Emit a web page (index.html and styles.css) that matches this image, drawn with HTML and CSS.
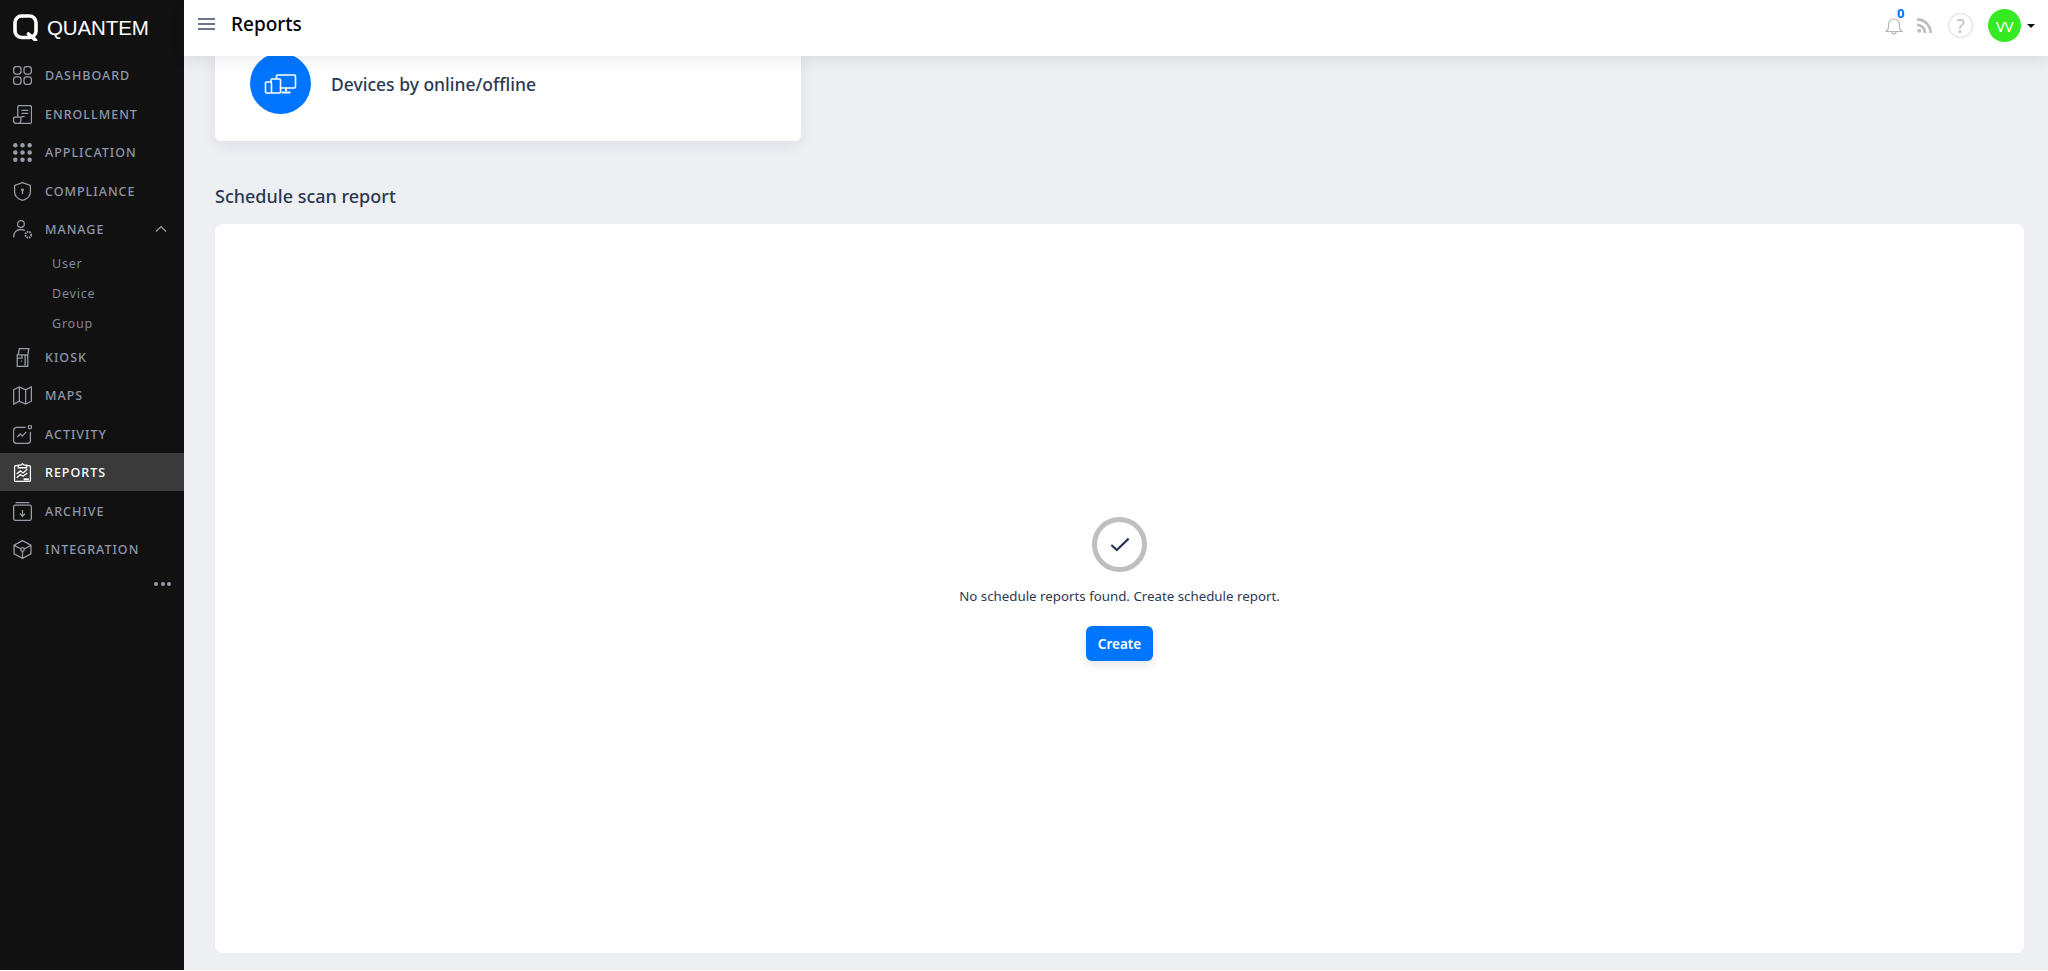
FILE: index.html
```html
<!DOCTYPE html>
<html lang="en">
<head>
<meta charset="utf-8">
<title>Reports</title>
<link rel="stylesheet" href="styles.css">
</head>
<body>
<div class="app">
  <aside class="sidebar">
    <div class="brand">
      <svg class="brand-mark" viewBox="0 0 27 27" fill="none" stroke="#fff"><rect x="2" y="2" width="21" height="21.5" rx="6.5" stroke-width="3.6"/><path d="M15.5 20l7 6" stroke-width="3.6" stroke-linecap="round"/></svg>
      <span class="brand-name">QUANTEM</span>
    </div>
    <nav class="nav">
      <a class="nav-item"><svg class="ico" viewBox="0 0 18 18"><rect x=".6" y=".6" width="7" height="7" rx="2.400"/><rect x="10.400" y=".6" width="7" height="7" rx="2.400"/><rect x=".6" y="10.400" width="7" height="7" rx="2.400"/><rect x="10.400" y="10.400" width="7" height="7" rx="2.400"/></svg><span>DASHBOARD</span></a>
      <a class="nav-item"><svg class="ico" viewBox="0 0 18 18"><path d="M4.500 11.500V2a1.500 1.500 0 0 1 1.500-1.500h10A1.500 1.500 0 0 1 17.500 2v14a1.500 1.500 0 0 1-1.500 1.500H3a2.500 2.500 0 0 1-2.500-2.500v-2.500a1 1 0 0 1 1-1H7.500V15a2.500 2.500 0 0 1-2.500 2.500M8 5h6.500M8 8h6.500M8 11h3"/></svg><span>ENROLLMENT</span></a>
      <a class="nav-item"><svg class="ico ico-solid" viewBox="0 0 18 18"><circle cx="2.200" cy="2.200" r="2.100"/><circle cx="9" cy="2.200" r="2.100"/><circle cx="15.800" cy="2.200" r="2.100"/><circle cx="2.200" cy="9" r="2.100"/><circle cx="9" cy="9" r="2.100"/><circle cx="15.800" cy="9" r="2.100"/><circle cx="2.200" cy="15.800" r="2.100"/><circle cx="9" cy="15.800" r="2.100"/><circle cx="15.800" cy="15.800" r="2.100"/></svg><span>APPLICATION</span></a>
      <a class="nav-item"><svg class="ico" viewBox="0 0 18 18"><path d="M9 .6l7.500 2.700v6c0 4.200-3.400 7-7.500 8.100-4.100-1.100-7.500-3.900-7.500-8.100v-6z"/><path d="M9 8v3.500"/><circle cx="9" cy="7.500" r=".8"/></svg><span>COMPLIANCE</span></a>
      <a class="nav-item"><svg class="ico" viewBox="0 0 18 18"><circle cx="7.500" cy="3.800" r="3.200"/><path d="M.6 16.500c0-5 2.800-7.500 6.900-7.500 1.500 0 2.700.3 3.700 1"/><circle cx="14.500" cy="14" r="2.800" stroke-dasharray="1.500 .8" stroke-width="1.800"/></svg><span>MANAGE</span><svg class="chev" viewBox="0 0 12 8"><path d="M1 6.500l5-5 5 5"/></svg></a>
      <div class="subnav">
        <a class="sub-item">User</a>
        <a class="sub-item">Device</a>
        <a class="sub-item">Group</a>
      </div>
      <a class="nav-item"><svg class="ico" viewBox="0 0 18 18"><path d="M4 17.500V6.500h7.500v11zM4 17.500h7.500M5 6.500L6 .6h9l-1 5.900-2.500.6M14 6.500v11h-2.500M4 9.500h4.500V6.500M7.500 12.500h1"/></svg><span>KIOSK</span></a>
      <a class="nav-item"><svg class="ico" viewBox="0 0 18 18"><path d="M.6 3.600L6 .8l6 2.800 5.400-2.800v13.600L12 17.200l-6-2.800-5.400 2.800zM6 .8v13.600M12 3.600v13.600"/></svg><span>MAPS</span></a>
      <a class="nav-item"><svg class="ico" viewBox="0 0 18 18"><path d="M12 2.200H3.500a3 3 0 0 0-3 3v9.300a3 3 0 0 0 3 3h10a3 3 0 0 0 3-3V6.500"/><circle cx="16" cy="2" r="1.600"/><path d="M4 11.500L6.800 8.500l2 2L12.500 6.500"/></svg><span>ACTIVITY</span></a>
      <a class="nav-item is-active"><svg class="ico" viewBox="0 0 18 18"><path d="M5 2.500H2.500a1 1 0 0 0-1 1v13a1 1 0 0 0 1 1h13a1 1 0 0 0 1-1v-13a1 1 0 0 0-1-1H13"/><path d="M5 2H7.500L9 .6 10.500 2H13v2.500H5z"/><path d="M3.500 10.500l3.500-3 2.500 2 4-3.500M3.500 14l3.500-3 2.500 1.500 4-3"/><path d="M10 15.500h5" stroke-width="2"/></svg><span>REPORTS</span></a>
      <a class="nav-item"><svg class="ico" viewBox="0 0 18 18"><path d="M2.500.6h13M.6 4.500A1.500 1.500 0 0 1 2.100 3h13.800a1.500 1.500 0 0 1 1.500 1.500v11.400a1.500 1.500 0 0 1-1.500 1.500H2.100a1.500 1.500 0 0 1-1.500-1.500zM9 7.500v6M6.500 11L9 13.500 11.500 11"/></svg><span>ARCHIVE</span></a>
      <a class="nav-item"><svg class="ico" viewBox="0 0 18 18"><path d="M9 .6l8 4.200v8.400l-8 4.200-8-4.200V4.800zM1.500 5.300L7.500 8.500M10.500 8.500l6-3.200M9 10.500v6"/><circle cx="9" cy="9" r="1.700"/></svg><span>INTEGRATION</span></a>
    </nav>
    <div class="more"><i></i><i></i><i></i></div>
  </aside>

  <div class="content">
    <header class="topbar">
      <svg class="burger" viewBox="0 0 17 12"><path d="M0 1h17M0 6h17M0 11h17"/></svg>
      <h1 class="page-title">Reports</h1>
      <div class="top-actions">
        <span class="bell">
          <svg class="bell-ico" viewBox="0 0 18 18"><path d="M1 14.500c1.500-1 2.500-2 2.500-4.500V7.500a5.500 5.500 0 0 1 11 0V10c0 2.500 1 3.500 2.500 4.500zM7 15c0 2.500 4 2.500 4 0"/></svg>
          <span class="bell-count">0</span>
        </span>
        <svg class="rss" viewBox="0 0 15 15"><circle cx="2.200" cy="12.800" r="2"/><path d="M0 5.500a9.500 9.500 0 0 1 9.500 9.500H6.800A6.800 6.800 0 0 0 0 8.200zM0 0a15 15 0 0 1 15 15h-2.700A12.300 12.300 0 0 0 0 2.700z"/></svg>
        <span class="help">?</span>
        <span class="avatar">VV</span>
        <span class="caret"></span>
      </div>
    </header>
    <main class="page">
      <section class="report-card">
        <span class="report-icon">
          <svg viewBox="0 0 32 20" fill="none" stroke="#fff" stroke-width="1.600"><rect x="12" y="1" width="19" height="13" rx="1"/><path d="M21.500 14v3M17 18.500h9" stroke-width="2"/><rect x="6.500" y="5" width="9.500" height="14" rx="1" fill="#0075ff"/><rect x="1" y="8" width="6" height="11" rx="1" fill="#0075ff"/></svg>
        </span>
        <span class="report-label">Devices by online/offline</span>
      </section>
      <h2 class="section-title">Schedule scan report</h2>
      <section class="empty-card">
        <span class="empty-icon"><svg viewBox="0 0 22 16"><path d="M1.500 8.500L7.500 14 20.500 1.500"/></svg></span>
        <p class="empty-text">No schedule reports found. Create schedule report.</p>
        <button class="btn-create" type="button">Create</button>
      </section>
    </main>
  </div>
</div>
</body>
</html>
```
FILE: styles.css
```css
* { box-sizing: border-box; }
html, body { margin: 0; height: 100%; background: #fff; overflow: hidden; }
body { font-family: "Noto Sans", "Open Sans", sans-serif; }

.app { display: flex; height: 970px; }

.sidebar { width: 184px; flex: none; background: #111; display: flex; flex-direction: column; }
.brand { height: 56px; display: flex; align-items: center; padding-left: 13px; flex: none; }
.brand-mark { width: 27px; height: 27px; margin-top: -2px; }
.brand-name { margin-left: 7px; font-family: "Liberation Sans", Arial, sans-serif; font-size: 20.500px; color: #fff; letter-spacing: -.1px; }

.nav { display: flex; flex-direction: column; }
.nav-item { height: 38.450px; display: flex; align-items: center; padding-left: 13px; padding-top: 1px; font-size: 12.500px; font-weight: 500; letter-spacing: 1px; color: #8e97aa; }
.nav-item span { margin-left: 13px; }
.ico { width: 19px; height: 19px; flex: none; fill: none; stroke: #999ca5; stroke-width: 1.200; }
.ico-solid { fill: #999ca5; stroke: none; }
.chev { width: 12px; height: 8px; margin-left: auto; margin-right: 17px; fill: none; stroke: #999ca5; stroke-width: 1.200; }
.is-active { background: #3a3a3a; color: #fff; }
.is-active .ico { stroke: #fff; }

.subnav { display: flex; flex-direction: column; }
.sub-item { height: 29.800px; display: flex; align-items: center; padding-left: 52px; padding-top: 1px; font-size: 12.500px; letter-spacing: .8px; color: #808899; }

.more { display: flex; justify-content: flex-end; gap: 2.500px; padding: 14px 13px 0 0; }
.more i { width: 4px; height: 4px; border-radius: 50%; background: #9a9ea8; }

.content { flex: 1; min-width: 0; display: flex; flex-direction: column; background: #eeeff3; }
.topbar { height: 56px; flex: none; display: flex; align-items: center; padding: 0 13px 5px 14px; background: #fff; position: relative; z-index: 2; box-shadow: 0 4px 14px rgba(40, 40, 60, .09); }
.burger { width: 17px; height: 12px; margin-bottom: 3px; fill: none; stroke: #3f4a63; stroke-width: 1.300; }
.page-title { margin: 0 0 3px 16px; font-size: 19px; font-weight: 500; color: #000; line-height: 1; }

.top-actions { margin-left: auto; display: flex; align-items: center; }
.bell { display: flex; position: relative; }
.bell-ico { width: 18px; height: 18px; fill: none; stroke: #b5b5b5; stroke-width: 1.200; }
.bell-count { position: absolute; left: 12px; top: -10px; font-size: 13px; font-weight: 700; line-height: 13px; color: #0075ff; }
.rss { width: 15px; height: 15px; margin-left: 14px; fill: #bdbdbd; }
.help { width: 25px; height: 25px; margin-left: 16px; border: 1px solid #d8d8d8; border-radius: 50%; display: flex; align-items: center; justify-content: center; font-size: 19px; color: #bdbdbd; }
.avatar { width: 33px; height: 33px; margin-left: 15px; border-radius: 50%; background: #35ea22; color: #fff; display: flex; align-items: center; justify-content: center; font-size: 15px; letter-spacing: -.5px; }
.caret { margin-left: 6px; border-left: 4px solid transparent; border-right: 4px solid transparent; border-top: 4px solid #111; }

.page { flex: 1; min-height: 0; display: flex; flex-direction: column; padding: 0 24px 17px 31px; }
.report-card { width: 586px; height: 95px; margin-top: -10px; flex: none; padding: 7px 0 0 35px; display: flex; align-items: flex-start; background: #fff; border-radius: 6px; box-shadow: 0 4px 14px rgba(40, 40, 60, .08); }
.report-icon { width: 61px; height: 61px; flex: none; border-radius: 50%; background: #0075ff; display: flex; align-items: center; justify-content: center; }
.report-icon svg { width: 33px; height: 20px; }
.report-label { margin-left: 20px; font-size: 17.500px; font-weight: 500; line-height: 63px; color: #2c3852; }

.section-title { margin: 43px 0 16px; font-size: 18px; font-weight: 500; line-height: 24px; color: #2c3852; }

.empty-card { flex: 1; min-height: 0; display: flex; flex-direction: column; align-items: center; padding-top: 293px; background: #fff; border-radius: 8px; }
.empty-icon { width: 55px; height: 55px; border: 5px solid #bfbfbf; border-radius: 50%; display: flex; align-items: center; justify-content: center; }
.empty-icon svg { width: 20px; height: 15px; fill: none; stroke: #2c3852; stroke-width: 2.400; }
.empty-text { margin: 14px 0 0; font-size: 13.300px; line-height: 20px; color: #2c3852; }
.btn-create { margin-top: 20px; width: 67px; height: 35px; padding: 0; border: 0; border-radius: 6px; background: #0075ff; color: #fff; font-family: inherit; font-size: 13.500px; font-weight: 600; box-shadow: 0 4px 10px rgba(40, 40, 60, .12); }
```
